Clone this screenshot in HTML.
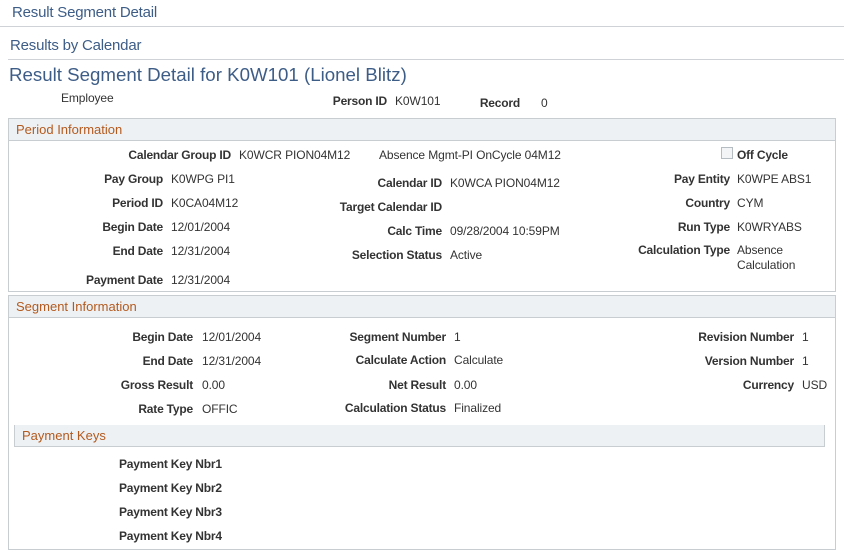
<!DOCTYPE html>
<html><head><meta charset="utf-8"><style>
body{margin:0;width:844px;height:558px;background:#fff;position:relative;overflow:hidden;font-family:"Liberation Sans",Arial,sans-serif;font-size:12px;color:#333}
div{position:absolute;white-space:nowrap}
.l{font-weight:bold;color:#333;text-align:right;line-height:14px;letter-spacing:-0.2px}
.v{color:#333;line-height:14px;letter-spacing:-0.1px}
.box{border:1px solid #c8cdd2;box-sizing:border-box}
.hd{background:#eef1f3;border-bottom:1px solid #c8cdd2;box-sizing:border-box;color:#b35a1f;font-size:13px;padding-left:7px;line-height:21px}
</style></head><body>
<div style="left:12px;top:4px;font-size:15px;color:#3d5d87;letter-spacing:-0.2px">Result Segment Detail</div>
<div style="left:0;top:26px;width:844px;height:1px;background:#cfd3d7"></div>
<div style="left:10px;top:37px;font-size:15px;color:#3d5d87;letter-spacing:-0.2px">Results by Calendar</div>
<div style="left:8px;top:59px;width:836px;height:1px;background:#cfd3d7"></div>
<div style="left:9px;top:64px;font-size:18.7px;color:#3d5d87">Result Segment Detail for K0W101 (Lionel Blitz)</div>
<div class="v" style="left:61px;top:91px">Employee</div>
<div class="l" style="right:457px;top:94px">Person ID</div><div class="v" style="left:395px;top:94px">K0W101</div>
<div class="l" style="right:324px;top:96px">Record</div><div class="v" style="left:541px;top:96px">0</div>

<div class="box" style="left:8px;top:118px;width:828px;height:174px"></div>
<div class="hd" style="left:9px;top:119px;width:826px;height:22px">Period Information</div>

<div class="l" style="right:613px;top:148px">Calendar Group ID</div><div class="v" style="left:239px;top:148px">K0WCR PION04M12</div>
<div class="v" style="left:379px;top:148px">Absence Mgmt-PI OnCycle 04M12</div>
<div style="left:721px;top:147px;width:12px;height:12px;border:1px solid #b5bcc2;background:#f2f4f5;box-sizing:border-box"></div>
<div class="l" style="left:737px;top:148px;text-align:left">Off Cycle</div>

<div class="l" style="right:681px;top:172px">Pay Group</div><div class="v" style="left:171px;top:172px">K0WPG PI1</div>
<div class="l" style="right:402px;top:176px">Calendar ID</div><div class="v" style="left:450px;top:176px">K0WCA PION04M12</div>
<div class="l" style="right:114px;top:172px">Pay Entity</div><div class="v" style="left:737px;top:172px">K0WPE ABS1</div>

<div class="l" style="right:681px;top:196px">Period ID</div><div class="v" style="left:171px;top:196px">K0CA04M12</div>
<div class="l" style="right:402px;top:200px">Target Calendar ID</div>
<div class="l" style="right:114px;top:196px">Country</div><div class="v" style="left:737px;top:196px">CYM</div>

<div class="l" style="right:681px;top:220px">Begin Date</div><div class="v" style="left:171px;top:220px">12/01/2004</div>
<div class="l" style="right:402px;top:224px">Calc Time</div><div class="v" style="left:450px;top:224px">09/28/2004 10:59PM</div>
<div class="l" style="right:114px;top:220px">Run Type</div><div class="v" style="left:737px;top:220px">K0WRYABS</div>

<div class="l" style="right:681px;top:244px">End Date</div><div class="v" style="left:171px;top:244px">12/31/2004</div>
<div class="l" style="right:402px;top:248px">Selection Status</div><div class="v" style="left:450px;top:248px">Active</div>
<div class="l" style="right:114px;top:243px">Calculation Type</div><div class="v" style="left:737px;top:243px;line-height:15px">Absence<br>Calculation</div>

<div class="l" style="right:681px;top:273px">Payment Date</div><div class="v" style="left:171px;top:273px">12/31/2004</div>

<div class="box" style="left:8px;top:295px;width:828px;height:255px"></div>
<div class="hd" style="left:9px;top:296px;width:826px;height:22px">Segment Information</div>

<div class="l" style="right:651px;top:330px">Begin Date</div><div class="v" style="left:202px;top:330px">12/01/2004</div>
<div class="l" style="right:398px;top:330px">Segment Number</div><div class="v" style="left:454px;top:330px">1</div>
<div class="l" style="right:50px;top:330px">Revision Number</div><div class="v" style="left:802px;top:330px">1</div>

<div class="l" style="right:651px;top:354px">End Date</div><div class="v" style="left:202px;top:354px">12/31/2004</div>
<div class="l" style="right:398px;top:353px">Calculate Action</div><div class="v" style="left:454px;top:353px">Calculate</div>
<div class="l" style="right:50px;top:354px">Version Number</div><div class="v" style="left:802px;top:354px">1</div>

<div class="l" style="right:651px;top:378px">Gross Result</div><div class="v" style="left:202px;top:378px">0.00</div>
<div class="l" style="right:398px;top:378px">Net Result</div><div class="v" style="left:454px;top:378px">0.00</div>
<div class="l" style="right:50px;top:378px">Currency</div><div class="v" style="left:802px;top:378px">USD</div>

<div class="l" style="right:651px;top:402px">Rate Type</div><div class="v" style="left:202px;top:402px">OFFIC</div>
<div class="l" style="right:398px;top:401px">Calculation Status</div><div class="v" style="left:454px;top:401px">Finalized</div>

<div class="hd" style="left:14px;top:425px;width:811px;height:22px;border-left:1px solid #c8cdd2;border-right:1px solid #c8cdd2">Payment Keys</div>
<div class="l" style="left:119px;top:457px;text-align:left">Payment Key Nbr1</div>
<div class="l" style="left:119px;top:481px;text-align:left">Payment Key Nbr2</div>
<div class="l" style="left:119px;top:505px;text-align:left">Payment Key Nbr3</div>
<div class="l" style="left:119px;top:529px;text-align:left">Payment Key Nbr4</div>
</body></html>
